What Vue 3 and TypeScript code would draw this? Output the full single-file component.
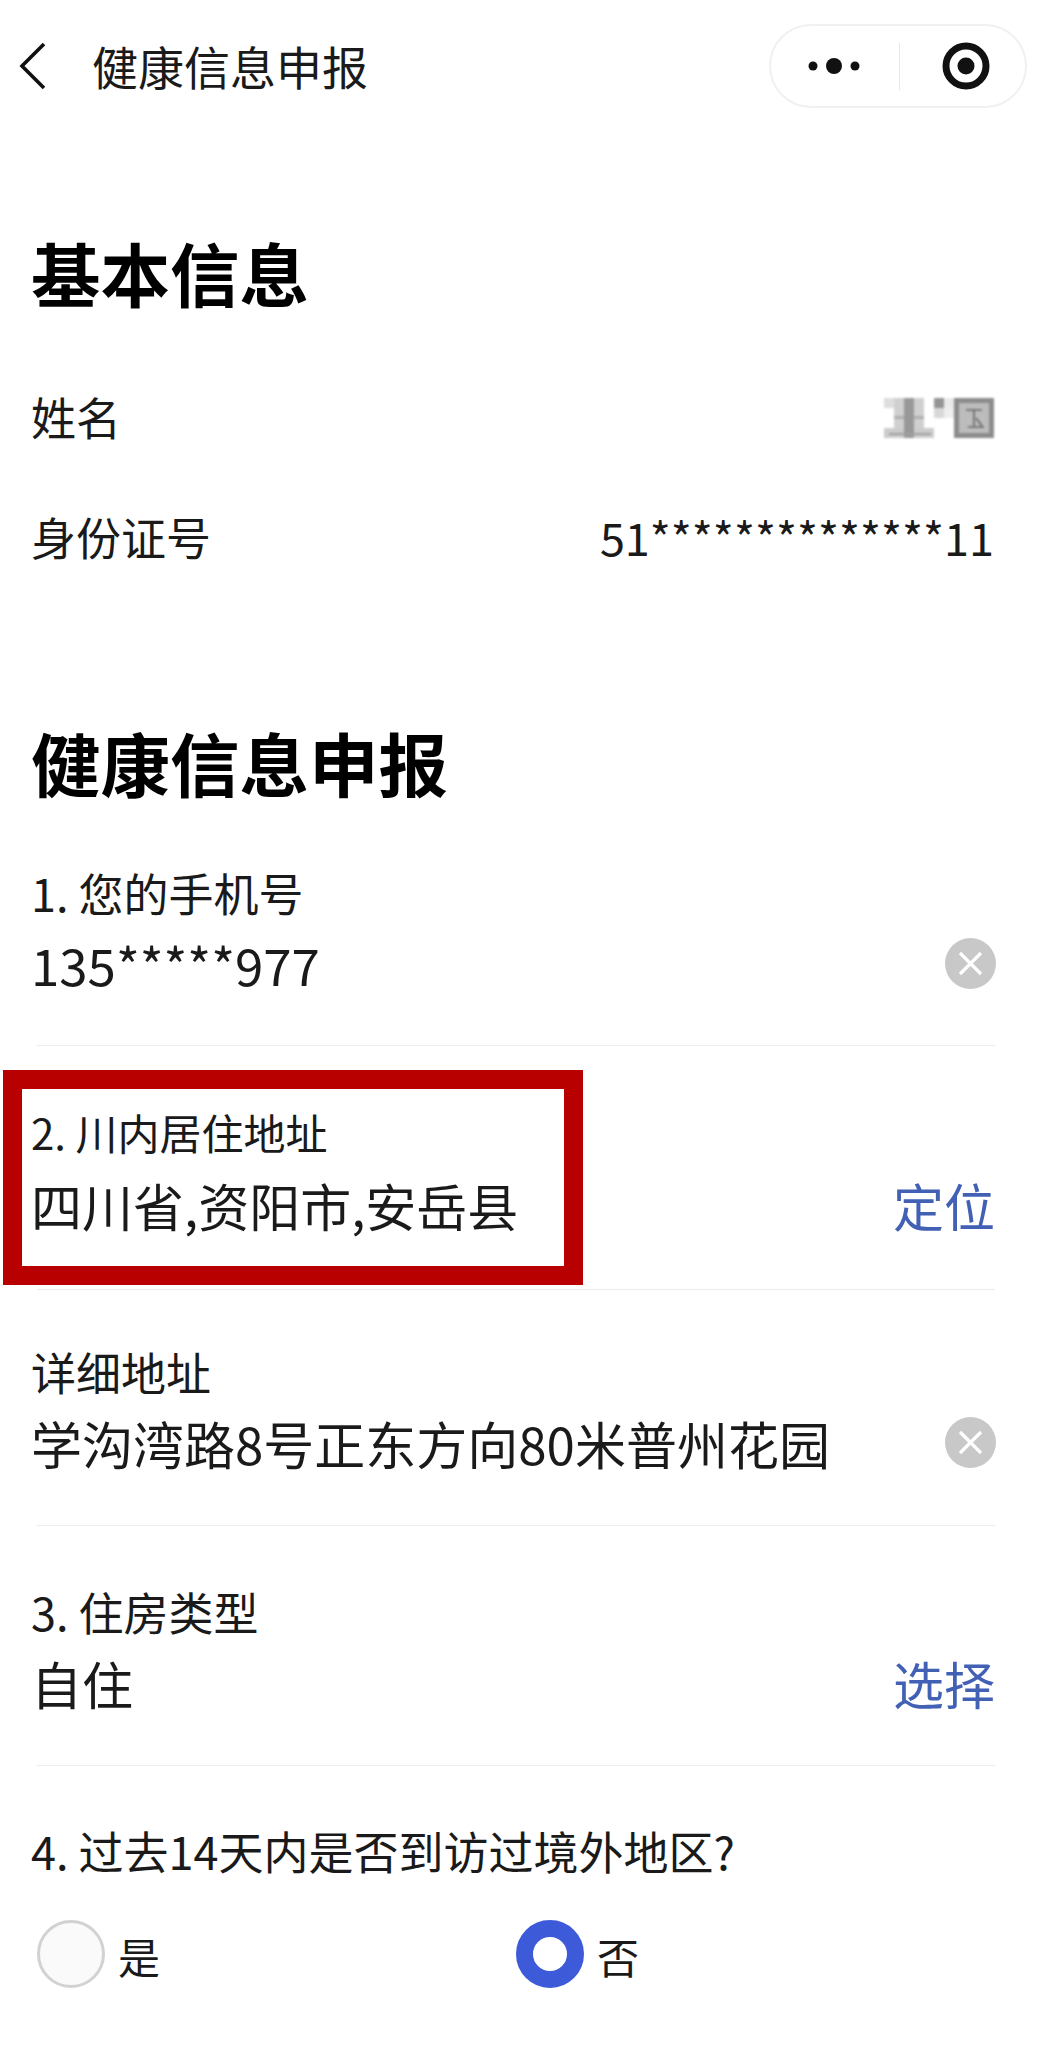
<script setup lang="ts">
interface Field {
  label: string
  value: string
  action?: 'clear' | 'link'
  linkText?: string
}

const fields: Field[] = [
  { label: '1. 您的手机号', value: '135*****977', action: 'clear' },
  { label: '2. 川内居住地址', value: '四川省,资阳市,安岳县', action: 'link', linkText: '定位' },
  { label: '详细地址', value: '学沟湾路8号正东方向80米普州花园', action: 'clear' },
  { label: '3. 住房类型', value: '自住', action: 'link', linkText: '选择' },
]
</script>

<template>
  <div class="page">
    <header class="nav">
      <svg class="back" width="28" height="48" viewBox="0 0 28 48">
        <path d="M25 2 L3 24 L25 46" fill="none" stroke="#111" stroke-width="3.6" />
      </svg>
      <span class="nav-title">健康信息申报</span>
      <div class="capsule">
        <svg class="dots" width="60" height="20" viewBox="0 0 60 20">
          <circle cx="9" cy="10" r="4.5" fill="#111" />
          <circle cx="30" cy="10" r="8" fill="#111" />
          <circle cx="51" cy="10" r="4.5" fill="#111" />
        </svg>
        <span class="capsule-line"></span>
        <svg class="target" width="48" height="48" viewBox="0 0 48 48">
          <circle cx="24" cy="24" r="20" fill="none" stroke="#111" stroke-width="7" />
          <circle cx="24" cy="24" r="8.5" fill="#111" />
        </svg>
      </div>
    </header>

    <h2 class="heading first">基本信息</h2>
    <div class="info-row">
      <span>姓名</span>
      <svg class="blur-name" width="110" height="40" viewBox="0 0 110 40">
        <rect x="0" y="0" width="40" height="10" fill="#dedede" />
        <rect x="10" y="0" width="30" height="40" fill="#d0d0d0" />
        <rect x="0" y="30" width="50" height="10" fill="#cccccc" />
        <rect x="10" y="18" width="30" height="3" fill="#b0b0b0" />
        <rect x="20" y="0" width="10" height="40" fill="#989898" />
        <rect x="5" y="35" width="42" height="2" fill="#a0a0a0" />
        <rect x="50" y="0" width="10" height="10" fill="#949494" />
        <rect x="60" y="0" width="10" height="10" fill="#eaeaea" />
        <rect x="50" y="10" width="10" height="10" fill="#d8d8d8" />
        <rect x="60" y="10" width="10" height="10" fill="#eeeeee" />
        <rect x="70" y="0" width="40" height="40" fill="#8c8c8c" />
        <rect x="75" y="5" width="30" height="30" fill="#bcbcbc" />
        <path d="M82 12h16M90 12v16M84 29h16M92 20l6 8" fill="none" stroke="#666" stroke-width="1.6" />
      </svg>
    </div>
    <div class="info-row">
      <span>身份证号</span>
      <span class="id-no">51**************11</span>
    </div>

    <h2 class="heading second">健康信息申报</h2>

    <section v-for="f in fields" :key="f.label" class="field-wrap">
      <div class="field">
        <div class="field-main">
          <div class="field-label">{{ f.label }}</div>
          <div class="field-value">{{ f.value }}</div>
        </div>
        <span v-if="f.action === 'clear'" class="clear">
          <svg width="51" height="51" viewBox="0 0 51 51">
            <circle cx="25.5" cy="25.5" r="25.5" fill="#c8c8c8" />
            <path d="M15 15 L36 36 M36 15 L15 36" stroke="#fff" stroke-width="3.2" />
          </svg>
        </span>
        <span v-else-if="f.action === 'link'" class="link">{{ f.linkText }}</span>
      </div>
      <div class="rule"></div>
    </section>

    <div class="question">4. 过去14天内是否到访过境外地区?</div>
    <div class="radios">
      <label class="radio radio-yes">
        <span class="dot"></span>
        <span class="radio-text">是</span>
      </label>
      <label class="radio">
        <span class="dot on"></span>
        <span class="radio-text">否</span>
      </label>
    </div>

    <div class="red-box"></div>
  </div>
</template>

<style scoped>
.page {
  position: relative;
  width: 1050px;
  height: 2062px;
  overflow: hidden;
  background: #fff;
  color: #111;
  font-family: "Noto Sans CJK SC", "Noto Sans", sans-serif;
}

.nav {
  display: flex;
  align-items: center;
  height: 132px;
  padding: 0 23px 0 19px;
  box-sizing: border-box;
}
.back {
  flex: none;
}
.nav-title {
  margin-left: 45px;
  margin-bottom: 3px;
  font-size: 46px;
  line-height: 60px;
  color: #1a1a1a;
}
.capsule {
  display: flex;
  align-items: center;
  width: 258px;
  height: 84px;
  margin-left: auto;
  box-sizing: border-box;
  border: 2px solid #f0f0f0;
  border-radius: 42px;
}
.dots {
  margin-left: 33px;
}
.capsule-line {
  width: 1px;
  height: 47px;
  margin-left: 35px;
  background: #e8e8e8;
}
.target {
  margin-left: 42px;
}

.heading {
  margin: 0;
  padding-left: 31px;
  font-size: 69.5px;
  line-height: 90px;
  font-weight: 700;
  color: #000;
}
.heading.first {
  margin-top: 95px;
  margin-bottom: 38px;
}
.heading.second {
  margin-top: 120px;
}

.info-row {
  display: flex;
  align-items: center;
  justify-content: space-between;
  height: 121px;
  padding: 0 56px 0 31px;
  font-size: 45px;
  color: #1a1a1a;
}
.info-row:first-of-type span {
  margin-top: 1px;
}
.id-no {
  font-size: 45px;
}
.blur-name {
  margin-top: 5px;
  filter: blur(0.8px);
}

.field-wrap {
  padding-top: 56px;
}
.field {
  display: flex;
  align-items: flex-end;
  justify-content: space-between;
  padding: 0 55px 0 31px;
}
.field-label {
  font-size: 45px;
  line-height: 60px;
  color: #1a1a1a;
}
.field-value {
  margin-top: 6px;
  font-size: 51px;
  line-height: 70px;
  color: #1a1a1a;
}
.clear {
  display: flex;
  margin-right: -1px;
  margin-bottom: 10px;
}
.link {
  font-size: 51px;
  line-height: 70px;
  color: #4260b4;
}
.rule {
  height: 1px;
  margin: 46px 55px 0 37px;
  background: #ececec;
}

.field-wrap:nth-of-type(2) .field-label {
  font-size: 42px;
}
.field-wrap:nth-of-type(2) .field-value {
  margin-top: 8px;
}
.field-wrap:nth-of-type(2) .rule {
  margin-top: 49px;
}
.field-wrap:nth-of-type(3) {
  padding-top: 52px;
}
.field-wrap:nth-of-type(3) .rule {
  margin-top: 47px;
}
.field-wrap:nth-of-type(4) {
  padding-top: 56px;
}
.field-wrap:nth-of-type(4) .rule {
  margin-top: 47px;
}

.question {
  margin-top: 55px;
  padding-left: 31px;
  font-size: 45px;
  line-height: 60px;
  color: #1a1a1a;
}
.radios {
  display: flex;
  margin-top: 37px;
  padding-left: 37px;
}
.radio {
  display: flex;
  align-items: center;
  gap: 13px;
  font-size: 42px;
  line-height: 68px;
  color: #1a1a1a;
}
.radio-yes {
  width: 479px;
}
.radio-text {
  margin-top: 4px;
}
.dot {
  width: 68px;
  height: 68px;
  box-sizing: border-box;
  border: 3px solid #d2d2d2;
  border-radius: 50%;
  background: #fafafa;
}
.dot.on {
  border: 17px solid #3d5bd9;
  background: #fff;
}

.red-box {
  position: absolute;
  left: 3px;
  top: 1070px;
  width: 580px;
  height: 215px;
  box-sizing: border-box;
  border: 19px solid #b80000;
}
</style>
